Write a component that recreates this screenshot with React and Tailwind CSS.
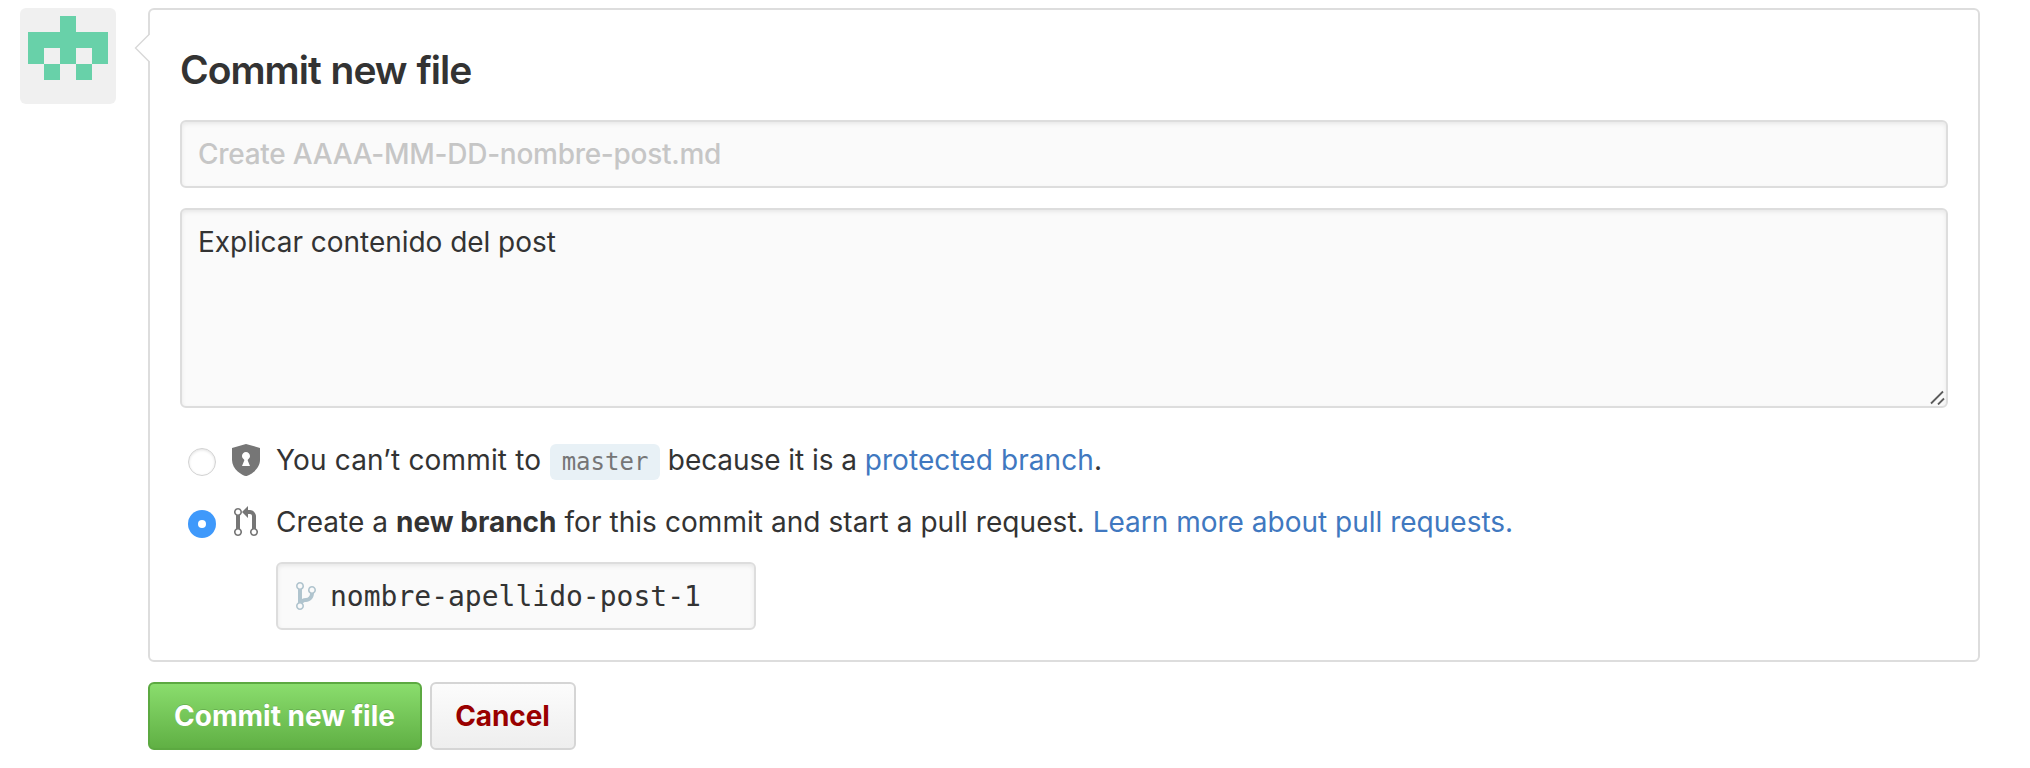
import React from "react";

const FIELD =
  "block rounded-[6px] border-2 border-[#ddd] bg-[#fafafa] shadow-[inset_0_2px_4px_rgba(0,0,0,0.075)] outline-none";

function Avatar() {
  return (
    <svg className="h-24 w-24 shrink-0 rounded-[6px] bg-[#f0f0f0]" viewBox="0 0 96 96" fill="#68d1a9" shapeRendering="crispEdges">
      <path d="M40 8h16v16h32v32H72V40H56v16H40V40H24v16H8V24h32z" />
      <path d="M24 56h16v16H24zM56 56h16v16H56z" />
    </svg>
  );
}

function Shield() {
  return (
    <svg className="h-8 w-7" viewBox="0 0 14 16" fill="#767676" fillRule="evenodd">
      <path d="M7 0L0 2v6.02C0 12.69 5.31 16 7 16c1.69 0 7-3.31 7-7.98V2L7 0zM5 11l1.14-2.8a.568.568 0 0 0-.25-.59C5.33 7.25 5 6.66 5 6c0-1.09.89-2 1.98-2C8.06 4 9 4.91 9 6c0 .66-.33 1.25-.89 1.61-.19.13-.3.36-.25.59L9 11H5z" />
    </svg>
  );
}

function PullRequest() {
  return (
    <svg className="h-8 w-6" viewBox="0 0 12 16" fill="#767676" fillRule="evenodd">
      <path d="M11 11.28V5c-.03-.78-.34-1.47-.94-2.06C9.46 2.35 8.78 2.03 8 2H7V0L4 3l3 3V4h1c.27.02.48.11.69.31.21.2.3.42.31.69v6.28A1.993 1.993 0 0 0 10 15a1.993 1.993 0 0 0 1-3.72zm-1 2.92c-.66 0-1.2-.55-1.2-1.2 0-.65.55-1.2 1.2-1.2.65 0 1.2.55 1.2 1.2 0 .65-.55 1.2-1.2 1.2zM4 3c0-1.11-.89-2-2-2a1.993 1.993 0 0 0-1 3.72v6.56A1.993 1.993 0 0 0 2 15a1.993 1.993 0 0 0 1-3.72V4.72c.59-.34 1-.98 1-1.72zm-.8 10c0 .66-.55 1.2-1.2 1.2-.65 0-1.2-.55-1.2-1.2 0-.65.55-1.2 1.2-1.2.65 0 1.2.55 1.2 1.2zM2 4.2C1.34 4.2.8 3.65.8 3c0-.65.55-1.2 1.2-1.2.65 0 1.2.55 1.2 1.2 0 .65-.55 1.2-1.2 1.2z" />
    </svg>
  );
}

function Branch() {
  return (
    <svg className="h-8 w-5 shrink-0" viewBox="0 0 10 16" fill="#b0c4ce" fillRule="evenodd">
      <path d="M10 5c0-1.11-.89-2-2-2a1.993 1.993 0 0 0-1 3.72v.3c-.02.52-.23.98-.63 1.38-.4.4-.86.61-1.38.63-.83.02-1.48.16-2 .45V4.72a1.993 1.993 0 0 0-1-3.72C.88 1 0 1.89 0 3a2 2 0 0 0 1 1.72v6.56c-.59.35-1 .99-1 1.72 0 1.11.89 2 2 2 1.11 0 2-.89 2-2 0-.53-.2-1-.53-1.36.09-.06.48-.41.59-.47.25-.11.56-.17.94-.17 1.05-.05 1.95-.45 2.75-1.25S8.95 7.77 9 6.73h-.02C9.59 6.37 10 5.73 10 5zM2 1.8c.66 0 1.2.55 1.2 1.2 0 .65-.55 1.2-1.2 1.2C1.35 4.2.8 3.65.8 3c0-.65.55-1.2 1.2-1.2zm0 12.41c-.66 0-1.2-.55-1.2-1.2 0-.65.55-1.2 1.2-1.2.65 0 1.2.55 1.2 1.2 0 .65-.55 1.2-1.2 1.2zm6-8c-.66 0-1.2-.55-1.2-1.2 0-.65.55-1.2 1.2-1.2.65 0 1.2.55 1.2 1.2 0 .65-.55 1.2-1.2 1.2z" />
    </svg>
  );
}

export default function App() {
  return (
    <main className="flex h-[768px] w-[2030px] gap-8 bg-white pl-5 pt-2 font-[Inter,'Liberation_Sans',sans-serif] text-[28px] leading-[42px] text-[#333]">
      <Avatar />
      <div className="w-[1832px]">
        <section className="relative h-[654px] rounded-[6px] border-2 border-[#ddd] px-[30px]">
          <svg className="absolute -left-4 top-[22px] h-8 w-4" viewBox="0 0 16 32">
            <path d="M16 2L2 16L16 30z" fill="#fff" />
            <path d="M15.5 2L1.5 16L15.5 30" fill="none" stroke="#d8d8d8" strokeWidth="1.4" />
          </svg>
          <h1 className="pt-[30px] text-[39px] font-semibold leading-[60px] tracking-[-1px] [word-spacing:1px]">Commit new file</h1>
          <input className={FIELD + " mt-5 h-[68px] w-full px-4 font-medium tracking-[-0.27px] placeholder:text-[#c6c6c6]"} placeholder="Create AAAA-MM-DD-nombre-post.md" />
          <div className="relative mt-5">
            <textarea className={FIELD + " h-[200px] w-full resize-none px-4 py-[11px] tracking-[-0.04px]"} defaultValue="Explicar contenido del post" />
            <svg className="absolute bottom-[3px] right-[3px] h-[15px] w-[15px]" viewBox="0 0 15 15" stroke="#5c5c5c" strokeWidth="1.8">
              <path d="M1 13.5L13 1.5M8 14.5L14 8.5" />
            </svg>
          </div>
          <div className="mt-[31px] flex h-[50px] items-start pl-2">
            <span className="mt-[9px] h-7 w-7 rounded-full border border-[#d2d2d2] bg-white shadow-[inset_0_1px_3px_rgba(0,0,0,0.12)]" />
            <span className="ml-4 mt-[5px] flex w-7 justify-center"><Shield /></span>
            <p className="ml-4 flex items-center whitespace-pre tracking-[0.16px]">
              <span className="w-[274px]">You can’t commit to </span>
              <code className="mt-1 h-9 w-[110px] rounded-[6px] bg-[#e8f1f6] text-center font-['DejaVu_Sans_Mono',monospace] text-[24px] leading-[36px] tracking-normal text-[#767676]">master</code>
              <span className="tracking-[-0.06px]"> because it is a <a className="tracking-[0.08px] text-[#4078c0]">protected branch</a>.</span>
            </p>
          </div>
          <div className="mt-3 flex h-[50px] items-start pl-2">
            <span className="mt-[9px] flex h-7 w-7 items-center justify-center rounded-full bg-[#3f99fb]">
              <span className="h-2 w-2 rounded-full bg-white" />
            </span>
            <span className="ml-4 mt-[5px] flex w-7 justify-center"><PullRequest /></span>
            <p className="ml-4 whitespace-pre tracking-[0.06px]">
              Create a <b className="font-bold tracking-normal">new branch</b> for this commit and start a pull request. <a className="tracking-normal text-[#4078c0]">Learn more about pull requests.</a>
            </p>
          </div>
          <label className={FIELD + " ml-24 mt-[11px] flex h-[68px] w-[480px] items-center gap-[14px] pl-[18px]"}>
            <Branch />
            <input className="mt-[2px] w-[400px] bg-transparent font-['DejaVu_Sans_Mono',monospace] outline-none" defaultValue="nombre-apellido-post-1" />
          </label>
        </section>
        <div className="mt-5 flex gap-2 font-bold">
          <button className="h-[68px] w-[274px] rounded-[6px] border-2 border-[#5ca941] bg-linear-to-b from-[#8add6d] to-[#60b044] pr-px text-white [text-shadow:0_-1px_0_rgba(0,0,0,0.15)]">Commit new file</button>
          <button className="h-[68px] w-[146px] rounded-[6px] border-2 border-[#d5d5d5] bg-linear-to-b from-[#fcfcfc] to-[#eee] pr-px tracking-[-0.1px] text-[#900]">Cancel</button>
        </div>
      </div>
    </main>
  );
}
